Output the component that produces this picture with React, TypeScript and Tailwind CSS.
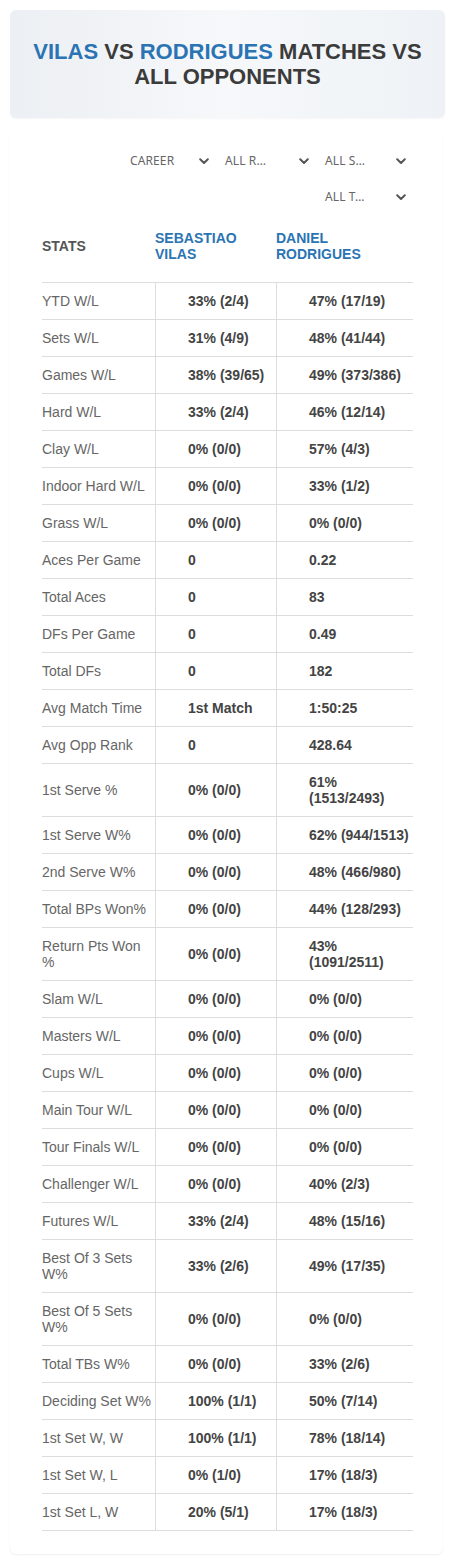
import React from "react";

const rows: [string, string, string][] = [
  ["YTD W/L", "33% (2/4)", "47% (17/19)"],
  ["Sets W/L", "31% (4/9)", "48% (41/44)"],
  ["Games W/L", "38% (39/65)", "49% (373/386)"],
  ["Hard W/L", "33% (2/4)", "46% (12/14)"],
  ["Clay W/L", "0% (0/0)", "57% (4/3)"],
  ["Indoor Hard W/L", "0% (0/0)", "33% (1/2)"],
  ["Grass W/L", "0% (0/0)", "0% (0/0)"],
  ["Aces Per Game", "0", "0.22"],
  ["Total Aces", "0", "83"],
  ["DFs Per Game", "0", "0.49"],
  ["Total DFs", "0", "182"],
  ["Avg Match Time", "1st Match", "1:50:25"],
  ["Avg Opp Rank", "0", "428.64"],
  ["1st Serve %", "0% (0/0)", "61% (1513/2493)"],
  ["1st Serve W%", "0% (0/0)", "62% (944/1513)"],
  ["2nd Serve W%", "0% (0/0)", "48% (466/980)"],
  ["Total BPs Won%", "0% (0/0)", "44% (128/293)"],
  ["Return Pts Won %", "0% (0/0)", "43% (1091/2511)"],
  ["Slam W/L", "0% (0/0)", "0% (0/0)"],
  ["Masters W/L", "0% (0/0)", "0% (0/0)"],
  ["Cups W/L", "0% (0/0)", "0% (0/0)"],
  ["Main Tour W/L", "0% (0/0)", "0% (0/0)"],
  ["Tour Finals W/L", "0% (0/0)", "0% (0/0)"],
  ["Challenger W/L", "0% (0/0)", "40% (2/3)"],
  ["Futures W/L", "33% (2/4)", "48% (15/16)"],
  ["Best Of 3 Sets W%", "33% (2/6)", "49% (17/35)"],
  ["Best Of 5 Sets W%", "0% (0/0)", "0% (0/0)"],
  ["Total TBs W%", "0% (0/0)", "33% (2/6)"],
  ["Deciding Set W%", "100% (1/1)", "50% (7/14)"],
  ["1st Set W, W", "100% (1/1)", "78% (18/14)"],
  ["1st Set W, L", "0% (1/0)", "17% (18/3)"],
  ["1st Set L, W", "20% (5/1)", "17% (18/3)"],
];

function Chevron() {
  return (
    <svg width="10" height="7" viewBox="0 0 10 7" fill="none">
      <path d="M1.2 1.3 L5 5 L8.8 1.3" stroke="#555" strokeWidth="2" strokeLinecap="round" strokeLinejoin="round" />
    </svg>
  );
}

function Select({ label, w, pl }: { label: string; w: string; pl: string }) {
  return (
    <div className={`flex h-[36px] items-center justify-between pr-[7px] ${w} ${pl}`}>
      <span className="text-[12px] text-[#666] [font-family:'Noto_Sans',sans-serif] tracking-[0.01em]">{label}</span>
      <Chevron />
    </div>
  );
}

export default function App() {
  return (
    <div className="min-h-[1565px] bg-white pt-[10px] [font-family:'Liberation_Sans',Arial,sans-serif]">
      <div className="mx-[10px] flex h-[108px] items-center justify-center rounded-[6px] bg-gradient-to-r from-[#eceff3] via-[#f6f8fa] to-[#eef2f6] px-4 shadow-[0_1px_2px_rgba(0,0,0,0.04)]">
        <h1 className="text-center text-[22px] font-bold leading-[25px] text-[#3b3b3b]">
          <span className="text-[#2b74b4]">VILAS</span> VS{" "}
          <span className="text-[#2b74b4]">RODRIGUES</span> MATCHES VS
          <br />
          ALL OPPONENTS
        </h1>
      </div>

      <div className="mx-[10px] mt-[12px] w-[433px] rounded-[6px] pb-[23px] pt-[13px] shadow-[0_1px_2px_rgba(0,0,0,0.07)]">
        <div className="flex justify-end pr-[30px]">
          <Select label="CAREER" w="w-[93px]" pl="pl-[7px]" />
          <Select label="ALL R…" w="w-[100px]" pl="pl-[9px]" />
          <Select label="ALL S…" w="w-[97px]" pl="pl-[9px]" />
        </div>
        <div className="flex justify-end pr-[30px]">
          <Select label="ALL T…" w="w-[97px]" pl="pl-[9px]" />
        </div>

        <div className="ml-[32px] mt-[8px] w-[371px]">
          <div className="flex h-[60px] items-center border-b border-[#dddddd] pb-[14px] text-[14px] font-bold uppercase leading-[16px]">
            <div className="w-[113px] text-[#555]">Stats</div>
            <div className="w-[121px] text-[#2b74b4]">Sebastiao<br />Vilas</div>
            <div className="w-[137px] text-[#2b74b4]">Daniel<br />Rodrigues</div>
          </div>
          {rows.map(([label, a, b]) => (
            <div key={label} className="flex border-b border-[#dddddd] text-[14px] leading-[16px]">
              <div className="flex w-[113px] items-center py-[10px] pr-[4px] text-[#666]">{label}</div>
              <div className="flex w-[121px] items-center border-l border-[#dddddd] py-[10px] pl-[32px] pr-[4px] font-bold text-[#444]">{a}</div>
              <div className="flex w-[137px] items-center border-l border-[#dddddd] py-[10px] pl-[32px] pr-[2px] font-bold text-[#444]">{b}</div>
            </div>
          ))}
        </div>
      </div>
    </div>
  );
}
